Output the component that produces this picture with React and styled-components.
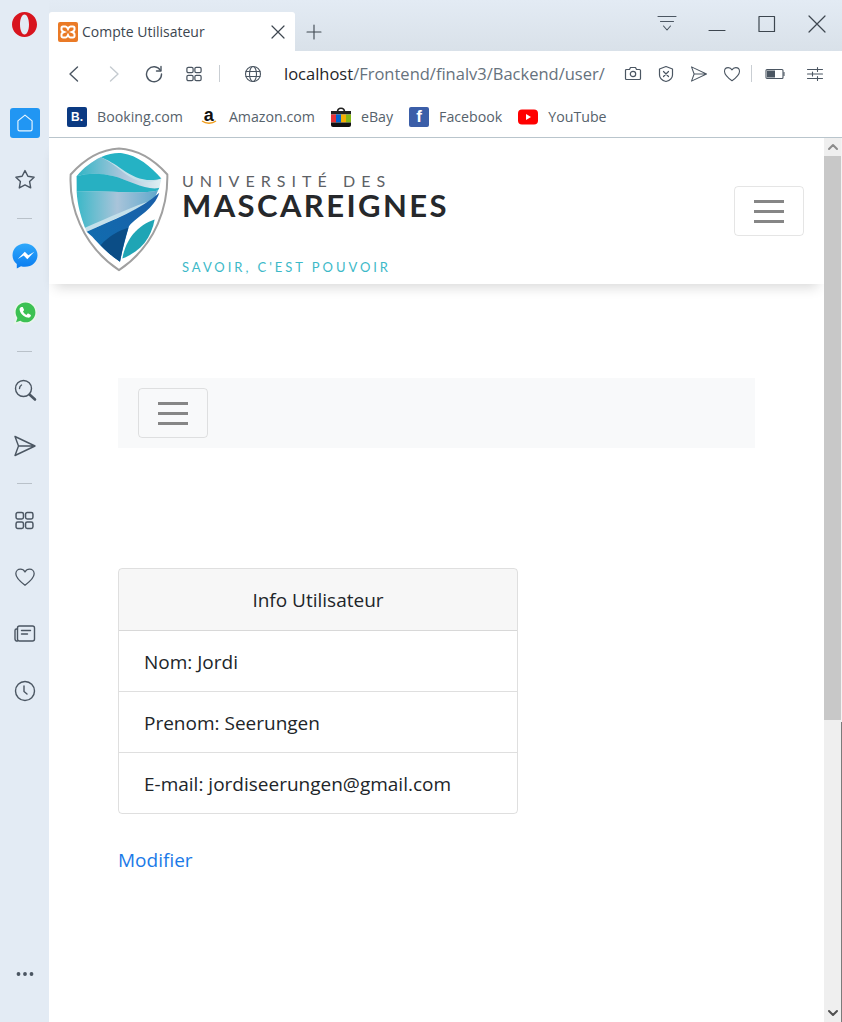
import React from 'react'
import styled, { createGlobalStyle } from 'styled-components'

const GlobalStyle = createGlobalStyle`
  * { box-sizing: border-box; }
  html, body { margin: 0; padding: 0; height: 100%; overflow: hidden; }
  body { font-family: "Open Sans", "Noto Sans", sans-serif; background: #fff; }
`

const Window = styled.div`
  display: flex;
  width: 842px;
  height: 1022px;
  background: #e3ebf4;
`

const Sidebar = styled.aside`
  width: 49px;
  flex: none;
  display: flex;
  flex-direction: column;
  align-items: center;
  padding: 12px 0 20px;
  background: #e3ebf4;
`

const OperaSlot = styled.div`
  height: 83px;
  width: 100%;
  display: flex;
  justify-content: center;
`

const SideSlot = styled.div`
  height: 56.6px;
  flex: none;
  width: 100%;
  display: flex;
  align-items: center;
  justify-content: center;
  ${p => p.$bottom && 'margin-top: auto;'}
`

const HomeButton = styled.div`
  width: 30px;
  height: 30px;
  background: #2196f3;
  border-radius: 3px;
  display: flex;
  align-items: center;
  justify-content: center;
`

const SideRule = styled.div`
  height: ${p => p.$h || 20}px;
  flex: none;
  display: flex;
  align-items: center;
  &::after {
    content: '';
    width: 15px;
    height: 1px;
    background: #b9c1c9;
  }
`

const Main = styled.div`
  flex: 1;
  min-width: 0;
  display: flex;
  flex-direction: column;
`

const TabStrip = styled.div`
  height: 51px;
  flex: none;
  display: flex;
  padding-top: 12px;
  background: linear-gradient(#e3ebf4, #d9e1e9);
`

const Tab = styled.div`
  width: 246px;
  height: 39px;
  background: #fff;
  border-radius: 3px 3px 0 0;
  display: flex;
  align-items: center;
  padding: 0 9px 0 9px;
  gap: 4px;
  font-size: 14px;
  color: #3c4650;
`

const TabTitle = styled.span`
  flex: 1;
`

const NewTab = styled.div`
  width: 38px;
  display: flex;
  align-items: center;
  justify-content: center;
  height: 39px;
`

const WindowControls = styled.div`
  margin-left: auto;
  display: flex;
  margin-top: -12px;
  height: 51px;
`

const WindowButton = styled.div`
  width: 50px;
  height: 48px;
  display: flex;
  align-items: center;
  justify-content: center;
`

const Toolbar = styled.div`
  height: 45px;
  flex: none;
  background: #fff;
  display: flex;
  align-items: center;
  padding: 0 7px 0 5px;
`

const ToolSlot = styled.div`
  width: ${p => p.$w || 40}px;
  height: 32px;
  flex: none;
  display: flex;
  align-items: center;
  justify-content: center;
`

const ToolRule = styled.div`
  width: 1px;
  height: 17px;
  flex: none;
  background: #c9ced3;
  margin: 0 ${p => p.$side || 3}px;
`

const Address = styled.div`
  font-size: 16.5px;
  color: #66727d;
  margin-left: 3px;
  white-space: nowrap;
  b { font-weight: 400; color: #1f2529; }
`

const RightTools = styled.div`
  margin-left: auto;
  display: flex;
  align-items: center;
`

const BookmarkBar = styled.div`
  height: 42px;
  flex: none;
  background: #fff;
  border-bottom: 1px solid #b9c5cc;
  display: flex;
  align-items: center;
  padding: 0 0 0 18px;
  gap: 16px;
`

const Bookmark = styled.div`
  display: flex;
  align-items: center;
  gap: 10px;
  font-size: 14.2px;
  color: #56626c;
`

const Favicon = styled.span`
  width: 20px;
  height: 20px;
  flex: none;
  display: flex;
  align-items: center;
  justify-content: center;
  border-radius: ${p => p.$round || 2}px;
  background: ${p => p.$bg || 'transparent'};
  color: ${p => p.$fg || '#fff'};
  font-family: "Liberation Sans", sans-serif;
  font-weight: 700;
  font-size: ${p => p.$size || 13}px;
  overflow: hidden;
`

const Viewport = styled.div`
  flex: 1;
  min-height: 0;
  display: flex;
  background: #fff;
`

const Page = styled.div`
  flex: 1;
  min-width: 0;
  color: #212529;
`

const SiteHeader = styled.header`
  height: 146px;
  display: flex;
  align-items: center;
  justify-content: space-between;
  padding: 0 20px;
  background: #fff;
  box-shadow: 0 9px 12px -6px rgba(0, 0, 0, 0.16);
`

const Logo = styled.div`
  display: flex;
  align-items: flex-start;
  gap: 13px;
  height: 126px;
  margin-top: -4px;
`

const LogoWords = styled.div`
  display: flex;
  flex-direction: column;
  padding-top: 26px;
`

const LogoTop = styled.div`
  font-family: Lato, sans-serif;
  font-size: 16px;
  line-height: 17px;
  letter-spacing: 6.05px;
  color: #5d6165;
  white-space: nowrap;
`

const LogoName = styled.div`
  font-family: Lato, sans-serif;
  font-size: 31px;
  line-height: 33px;
  letter-spacing: 2.4px;
  color: #26282b;
  font-weight: 700;
  white-space: nowrap;
`

const LogoMotto = styled.div`
  font-family: Lato, sans-serif;
  font-size: 13px;
  line-height: 14px;
  margin-top: 38px;
  letter-spacing: 2.95px;
  color: #3cb9c8;
  white-space: nowrap;
`

const Toggler = styled.button`
  width: 70px;
  height: 50px;
  padding: 0;
  background: transparent;
  border: 1px solid rgba(0, 0, 0, 0.1);
  border-radius: 4px;
  display: flex;
  flex-direction: column;
  align-items: center;
  justify-content: center;
  gap: 7px;
  span {
    width: 30px;
    height: 3px;
    background: #868686;
  }
`

const Content = styled.main`
  padding: 94px 69px 0;
`

const SubNav = styled.nav`
  height: 70px;
  background: #f8f9fa;
  display: flex;
  align-items: center;
  padding: 0 20px;
`

const Card = styled.section`
  width: 400px;
  margin-top: 120px;
  border: 1px solid rgba(0, 0, 0, 0.125);
  border-radius: 4px;
  overflow: hidden;
`

const CardHeader = styled.div`
  height: 62px;
  display: flex;
  align-items: center;
  justify-content: center;
  background: rgba(0, 0, 0, 0.03);
  border-bottom: 1px solid rgba(0, 0, 0, 0.125);
  font-size: 19px;
`

const CardRow = styled.div`
  height: 61px;
  display: flex;
  align-items: center;
  padding: 2px 25px 0;
  font-size: 19px;
  border-bottom: 1px solid rgba(0, 0, 0, 0.125);
  &:last-child {
    height: 60px;
    border-bottom: 0;
  }
`

const EditLink = styled.a`
  display: inline-block;
  margin-top: 31px;
  font-size: 19px;
  line-height: 30px;
  color: #1b7ae8;
  text-decoration: none;
`

const Scrollbar = styled.div`
  width: 18px;
  flex: none;
  display: flex;
  flex-direction: column;
  background: #efefef;
  border-right: 1px solid;
  border-image: linear-gradient(#f4f4f4 0 66%, #7b7b7b 66%) 1;
`

const ScrollArrow = styled.div`
  height: 18px;
  flex: none;
  display: flex;
  align-items: center;
  justify-content: center;
  ${p => p.$end && 'margin-top: auto;'}
`

const ScrollThumb = styled.div`
  height: 564px;
  background: #c8c8c8;
`

const Glyph = styled.svg`
  display: block;
  flex: none;
  fill: none;
  stroke: ${p => p.$color || '#4b5662'};
  stroke-width: ${p => p.$weight || 1.4};
  stroke-linecap: round;
  stroke-linejoin: round;
`

const ShieldSvg = styled.svg`
  display: block;
  flex: none;
  filter: blur(0.35px);
`

const Icon = ({ size = 24, color, weight, view = '0 0 24 24', children }) => (
  <Glyph width={size} height={size} viewBox={view} $color={color} $weight={weight}>
    {children}
  </Glyph>
)

const StarIcon = () => (
  <Icon><path d="M12 2.6l2.9 5.7 6.2.9-4.5 4.4 1.1 6.3-5.7-3-5.7 3 1.1-6.3-4.5-4.4 6.2-.9z" /></Icon>
)
const SearchIcon = () => (
  <Icon>
    <circle cx="10.5" cy="10.5" r="8" />
    <path d="M6.5 10.5a4 4 0 0 1 2-3.5" />
    <path d="M16.5 16.5l5.5 5" strokeWidth="2.6" />
  </Icon>
)
const SendIcon = ({ size = 24 }) => (
  <Icon size={size}><path d="M2 2.5l20 9.5-20 9.5 3.5-9.5zM5.5 12h16" /></Icon>
)
const GridIcon = ({ size = 16, color }) => (
  <Icon size={size} color={color} view="0 0 18 18">
    <rect x="1" y="1.5" width="7" height="6" rx="1.6" />
    <rect x="10" y="1.5" width="7" height="6" rx="1.6" />
    <rect x="1" y="10.5" width="7" height="6" rx="1.6" />
    <rect x="10" y="10.5" width="7" height="6" rx="1.6" />
  </Icon>
)
const HeartIcon = ({ size = 22 }) => (
  <Icon size={size}><path d="M12 21C6 16.500 2 13 2 8.500 2 5.500 4.300 3.500 7 3.500c2 0 3.900 1 5 3 1.100-2 3-3 5-3 2.700 0 5 2 5 5 0 4.500-4 8-10 12.500z" /></Icon>
)
const NewsIcon = () => (
  <Icon>
    <rect x="4.500" y="4" width="17" height="15" rx="2" />
    <path d="M4.500 7H3.500a1.500 1.500 0 0 0-1.500 1.500V17a2 2 0 0 0 2.500 2" />
    <path d="M8.500 8.500h9M8.500 12h6" />
  </Icon>
)
const ClockIcon = () => (
  <Icon>
    <circle cx="12" cy="12" r="9.500" />
    <path d="M11 7v5.500l3 2.500" />
  </Icon>
)

const OperaLogo = () => (
  <svg width="25" height="25" viewBox="0 0 25 25">
    <path
      fillRule="evenodd"
      fill="#d8141e"
      d="M12.500 0C5.600 0 0 5.600 0 12.500S5.600 25 12.500 25 25 19.400 25 12.500 19.400 0 12.500 0zm0 2.500c2.700 0 4.500 4.500 4.500 10s-1.800 10-4.500 10-4.500-4.500-4.500-10 1.800-10 4.500-10z"
    />
  </svg>
)

const MessengerLogo = () => (
  <svg width="26" height="26" viewBox="0 0 26 26">
    <defs>
      <linearGradient id="msgr" x1="0" y1="1" x2="0" y2="0">
        <stop offset="0" stopColor="#0a7cf0" />
        <stop offset="1" stopColor="#2fa8fb" />
      </linearGradient>
    </defs>
    <path fill="url(#msgr)" d="M13 .5C6 .5.500 5.600.500 12.200c0 3.600 1.600 6.700 4.300 8.800v4.500l4.200-2.300c1.300.4 2.600.6 4 .6 7 0 12.500-5.100 12.500-11.600S20 .5 13 .5z" />
    <path fill="#fff" d="M5.800 16l7-7.300 3.500 3.500 6-3.400-7 7.400-3.600-3.600z" />
  </svg>
)

const WhatsappLogo = () => (
  <svg width="26" height="26" viewBox="0 0 26 26">
    <path fill="#e9f5ec" d="M13.500 1C7 1 2 6 2 12.300c0 2.200.6 4.200 1.700 6L1.500 24.700l6.700-2.100c1.600.8 3.400 1.300 5.300 1.300C20 23.900 25 18.800 25 12.400S20 1 13.500 1z" />
    <path fill="#3cc153" d="M13.500 2.500C8 2.500 3.600 6.900 3.600 12.300c0 2.100.7 4 1.800 5.600l-1.400 4.300 4.400-1.400c1.500 1 3.300 1.500 5.100 1.500 5.500 0 9.900-4.400 9.900-9.900S19 2.500 13.500 2.500z" />
    <path fill="#fff" d="M9.800 7.100c.5-.2 1-.2 1.200.3l1 2.300c.1.300 0 .6-.2.800l-.8 1c.7 1.500 1.900 2.700 3.500 3.400l1-1.100c.2-.2.500-.3.800-.2l2.200 1.100c.4.200.5.600.4 1-.4 1.500-1.900 2.200-3.300 1.900-4-.8-7.300-4-8-7.800-.2-1.200.6-2.300 1.700-2.700z" />
  </svg>
)

const XamppLogo = () => (
  <svg width="20" height="20" viewBox="0 0 20 20">
    <rect width="20" height="20" rx="2" fill="#ea7a26" />
    <path fill="none" stroke="#fff" strokeWidth="2" d="M5 4.500h2.500c1.500 0 2 1.500 2.500 2.500.5-1 1-2.500 2.500-2.500H15a1.500 1.500 0 0 1 1.500 1.500v1.500c0 1-1 2-2.500 2.500 1.500.5 2.500 1.500 2.500 2.500V14a1.500 1.500 0 0 1-1.500 1.500h-2.500C11 15.500 10.500 14 10 13c-.5 1-1 2.500-2.500 2.500H5A1.500 1.500 0 0 1 3.500 14v-1.500c0-1 1-2 2.500-2.500-1.500-.5-2.500-1.500-2.500-2.500V6A1.500 1.500 0 0 1 5 4.500z" />
  </svg>
)

const EbayBag = () => (
  <svg width="20" height="20" viewBox="0 0 20 20">
    <path fill="none" stroke="#222" strokeWidth="1.600" d="M6.500 5c0-5 7-5 7 0" />
    <rect y="4" width="20" height="3.500" fill="#222" />
    <rect y="7.500" width="5" height="8" fill="#e53238" />
    <rect x="5" y="7.500" width="5" height="8" fill="#0064d2" />
    <rect x="10" y="7.500" width="5" height="8" fill="#f5af02" />
    <rect x="15" y="7.500" width="5" height="8" fill="#86b817" />
    <rect y="15.500" width="20" height="4.500" fill="#111" />
  </svg>
)

const YoutubeLogo = () => (
  <svg width="20" height="16" viewBox="0 0 20 16">
    <rect width="20" height="15" y=".5" rx="4" fill="#f00" />
    <path d="M8 5l5 3-5 3z" fill="#fff" />
  </svg>
)

const AmazonSmile = styled.svg`
  display: block;
  margin-top: -3px;
`

const AmazonMark = styled.span`
  display: flex;
  flex-direction: column;
  align-items: center;
  color: #111;
  font-size: 18px;
  line-height: 15px;
`

const ShieldLogo = () => (
  <ShieldSvg width="100" height="127" viewBox="55 25 300 380">
    <defs>
      <linearGradient id="paleBand" x1="0" y1="0" x2="1" y2="0">
        <stop offset="0" stopColor="#2fb5c5" />
        <stop offset=".55" stopColor="#aec6dc" />
        <stop offset="1" stopColor="#dff0f3" />
      </linearGradient>
      <linearGradient id="midBand" x1="0" y1="0" x2="1" y2="0">
        <stop offset="0" stopColor="#3bb8c8" />
        <stop offset=".5" stopColor="#a9c4da" />
        <stop offset="1" stopColor="#5fa8cc" />
      </linearGradient>
      <linearGradient id="blueBand" x1="0" y1="1" x2="1" y2="0">
        <stop offset="0" stopColor="#0f6fb0" />
        <stop offset="1" stopColor="#1a5ea8" />
      </linearGradient>
    </defs>
    <path
      d="M205 32C150 35 100 65 60 110C55 200 90 320 205 397C320 320 352 200 350 110C310 65 260 35 205 32Z"
      fill="#fff"
      stroke="#a0a0a0"
      strokeWidth="6"
    />
    <path fill="#c4e0ea" d="M78 115C100 88 125 70 150 58L332 122L310 190L108 282C90 235 80 200 78 115Z" />
    <path fill="#25b2c4" d="M150 58C175 48 195 44 215 46C260 52 300 85 332 122C290 135 250 120 215 95C195 80 170 65 150 58Z" />
    <path fill="url(#paleBand)" d="M78 115C100 88 125 70 150 58C180 70 205 95 235 115C265 135 300 138 332 122L326 150C290 160 230 125 190 115C150 105 110 105 78 115Z" />
    <path fill="#27b0c2" d="M78 115C110 105 150 105 190 115C230 125 290 160 326 150L322 158C260 172 150 155 78 162Z" />
    <path fill="url(#midBand)" d="M78 162C150 155 260 172 322 158L310 185C250 205 170 240 103 270C90 235 80 200 78 162Z" />
    <path fill="url(#blueBand)" d="M108 282C190 245 270 215 326 165C310 215 260 235 235 265C225 300 215 335 208 372C175 350 145 320 125 297Z" />
    <path fill="#0b4d86" d="M150 322C175 295 205 278 233 270C222 305 214 340 208 372C188 358 168 342 150 322Z" />
    <path fill="#1fa5b5" d="M215 362C225 305 260 262 312 245C302 300 270 342 215 362Z" />
  </ShieldSvg>
)

export default function App() {
  return (
    <>
      <GlobalStyle />
      <Window>
        <Sidebar>
          <OperaSlot><OperaLogo /></OperaSlot>
          <SideSlot>
            <HomeButton>
              <Icon size={20} color="#e8f6ff"><path d="M12 2.500l8.500 7v10a2 2 0 0 1-2 2h-13a2 2 0 0 1-2-2v-10z" /></Icon>
            </HomeButton>
          </SideSlot>
          <SideSlot><StarIcon /></SideSlot>
          <SideRule />
          <SideSlot><MessengerLogo /></SideSlot>
          <SideSlot><WhatsappLogo /></SideSlot>
          <SideRule />
          <SideSlot><SearchIcon /></SideSlot>
          <SideSlot><SendIcon /></SideSlot>
          <SideRule $h={18} />
          <SideSlot><GridIcon size={19} /></SideSlot>
          <SideSlot><HeartIcon /></SideSlot>
          <SideSlot><NewsIcon /></SideSlot>
          <SideSlot><ClockIcon /></SideSlot>
          <SideSlot $bottom>
            <Icon size={20} view="0 0 20 20">
              <circle cx="3.500" cy="10" r="1.200" fill="#4b5662" />
              <circle cx="10" cy="10" r="1.200" fill="#4b5662" />
              <circle cx="16.500" cy="10" r="1.200" fill="#4b5662" />
            </Icon>
          </SideSlot>
        </Sidebar>

        <Main>
          <TabStrip>
            <Tab>
              <XamppLogo />
              <TabTitle>Compte Utilisateur</TabTitle>
              <Icon size={16} view="0 0 16 16" color="#3d464f" weight={1.2}><path d="M2 2l12 12M14 2L2 14" /></Icon>
            </Tab>
            <NewTab>
              <Icon size={16} view="0 0 16 16" color="#3d464f" weight={1.1}><path d="M8 1v14M1 8h14" /></Icon>
            </NewTab>
            <WindowControls>
              <WindowButton>
                <Icon size={20} view="0 0 20 20" weight={1.1}>
                  <path d="M1 2.500h18M3.500 7.500h13M6.500 12l3.500 4 3.500-4" />
                </Icon>
              </WindowButton>
              <WindowButton>
                <Icon size={18} view="0 0 18 18" weight={1.1} color="#3d464f"><path d="M1 15.500h16" /></Icon>
              </WindowButton>
              <WindowButton>
                <Icon size={18} view="0 0 18 18" weight={1.2} color="#3d464f"><rect x="1" y="1.500" width="15.500" height="15" /></Icon>
              </WindowButton>
              <WindowButton>
                <Icon size={18} view="0 0 18 18" weight={1.2} color="#3d464f"><path d="M1 1l16 16M17 1L1 17" /></Icon>
              </WindowButton>
            </WindowControls>
          </TabStrip>

          <Toolbar>
            <ToolSlot>
              <Icon size={18} view="0 0 18 18"><path d="M12.500 2l-7.500 7 7.500 7" /></Icon>
            </ToolSlot>
            <ToolSlot>
              <Icon size={18} view="0 0 18 18" color="#c5cbd0"><path d="M5.500 2l7.500 7-7.500 7" /></Icon>
            </ToolSlot>
            <ToolSlot>
              <Icon size={18} view="0 0 18 18">
                <path d="M15.500 5.500A7.500 7.500 0 1 0 16.500 9" />
                <path d="M16 1.500v4.500h-4.500" />
              </Icon>
            </ToolSlot>
            <ToolSlot><GridIcon /></ToolSlot>
            <ToolRule $side={5} />
            <ToolSlot $w={56}>
              <Icon size={18} view="0 0 18 18" weight={1.1}>
                <circle cx="9" cy="9" r="7.500" />
                <ellipse cx="9" cy="9" rx="3.500" ry="7.500" />
                <path d="M2 6.500h14M2 11.500h14" />
              </Icon>
            </ToolSlot>
            <Address><b>localhost</b>/Frontend/finalv3/Backend/user/</Address>
            <RightTools>
              <ToolSlot $w={33}>
                <Icon size={18} view="0 0 18 18" weight={1.2}>
                  <path d="M2.500 4.500h3l1-2h5l1 2h3a1 1 0 0 1 1 1v8a1 1 0 0 1-1 1h-13a1 1 0 0 1-1-1v-8a1 1 0 0 1 1-1z" />
                  <circle cx="9" cy="9" r="2.700" />
                </Icon>
              </ToolSlot>
              <ToolSlot $w={33}>
                <Icon size={18} view="0 0 18 18" weight={1.2}>
                  <path d="M9 1.500l6.500 2.500v6c0 3-3 5.500-6.500 6.500-3.500-1-6.500-3.500-6.500-6.500V4z" />
                  <path d="M6.500 6.500l5 5M11.500 6.500l-5 5" />
                </Icon>
              </ToolSlot>
              <ToolSlot $w={33}><SendIcon size={18} /></ToolSlot>
              <ToolSlot $w={33}><HeartIcon size={18} /></ToolSlot>
              <ToolRule />
              <ToolSlot>
                <Icon size={20} view="0 0 20 20" weight={1.1}>
                  <rect x="1" y="5.500" width="17" height="9" rx="1" />
                  <rect x="2" y="6.500" width="8" height="7" fill="#4b5662" stroke="none" />
                  <path d="M19 8.500v3" />
                </Icon>
              </ToolSlot>
              <ToolSlot>
                <Icon size={18} view="0 0 18 18" weight={1.1}>
                  <path d="M1.500 4.500h15M1.500 9h15M1.500 13.500h15M11.500 2.500v4M6.500 7v4M11.500 11.500v4" />
                </Icon>
              </ToolSlot>
            </RightTools>
          </Toolbar>

          <BookmarkBar>
            <Bookmark>
              <Favicon $bg="#0b3a82" $size={12}>B.</Favicon>
              Booking.com
            </Bookmark>
            <Bookmark>
              <Favicon $fg="#111">
                <AmazonMark>
                  a
                  <AmazonSmile width="16" height="5" viewBox="0 0 16 5">
                    <path d="M1 1c4 3 10 3 14 0" fill="none" stroke="#f19e1d" strokeWidth="1.400" />
                  </AmazonSmile>
                </AmazonMark>
              </Favicon>
              Amazon.com
            </Bookmark>
            <Bookmark>
              <Favicon><EbayBag /></Favicon>
              eBay
            </Bookmark>
            <Bookmark>
              <Favicon $bg="#3b5ea8" $size={17}>f</Favicon>
              Facebook
            </Bookmark>
            <Bookmark>
              <Favicon><YoutubeLogo /></Favicon>
              YouTube
            </Bookmark>
          </BookmarkBar>

          <Viewport>
            <Page>
              <SiteHeader>
                <Logo>
                  <ShieldLogo />
                  <LogoWords>
                    <LogoTop>UNIVERSITÉ DES</LogoTop>
                    <LogoName>MASCAREIGNES</LogoName>
                    <LogoMotto>SAVOIR, C'EST POUVOIR</LogoMotto>
                  </LogoWords>
                </Logo>
                <Toggler aria-label="menu"><span /><span /><span /></Toggler>
              </SiteHeader>
              <Content>
                <SubNav>
                  <Toggler aria-label="menu utilisateur"><span /><span /><span /></Toggler>
                </SubNav>
                <Card>
                  <CardHeader>Info Utilisateur</CardHeader>
                  <CardRow>Nom: Jordi</CardRow>
                  <CardRow>Prenom: Seerungen</CardRow>
                  <CardRow>E-mail: jordiseerungen@gmail.com</CardRow>
                </Card>
                <EditLink href="#">Modifier</EditLink>
              </Content>
            </Page>
            <Scrollbar>
              <ScrollArrow>
                <Icon size={12} view="0 0 12 12" color="#8c8c8c" weight={2}><path d="M2 8l4-4 4 4" /></Icon>
              </ScrollArrow>
              <ScrollThumb />
              <ScrollArrow $end>
                <Icon size={12} view="0 0 12 12" color="#505050" weight={2}><path d="M2 4l4 4 4-4" /></Icon>
              </ScrollArrow>
            </Scrollbar>
          </Viewport>
        </Main>
      </Window>
    </>
  )
}
